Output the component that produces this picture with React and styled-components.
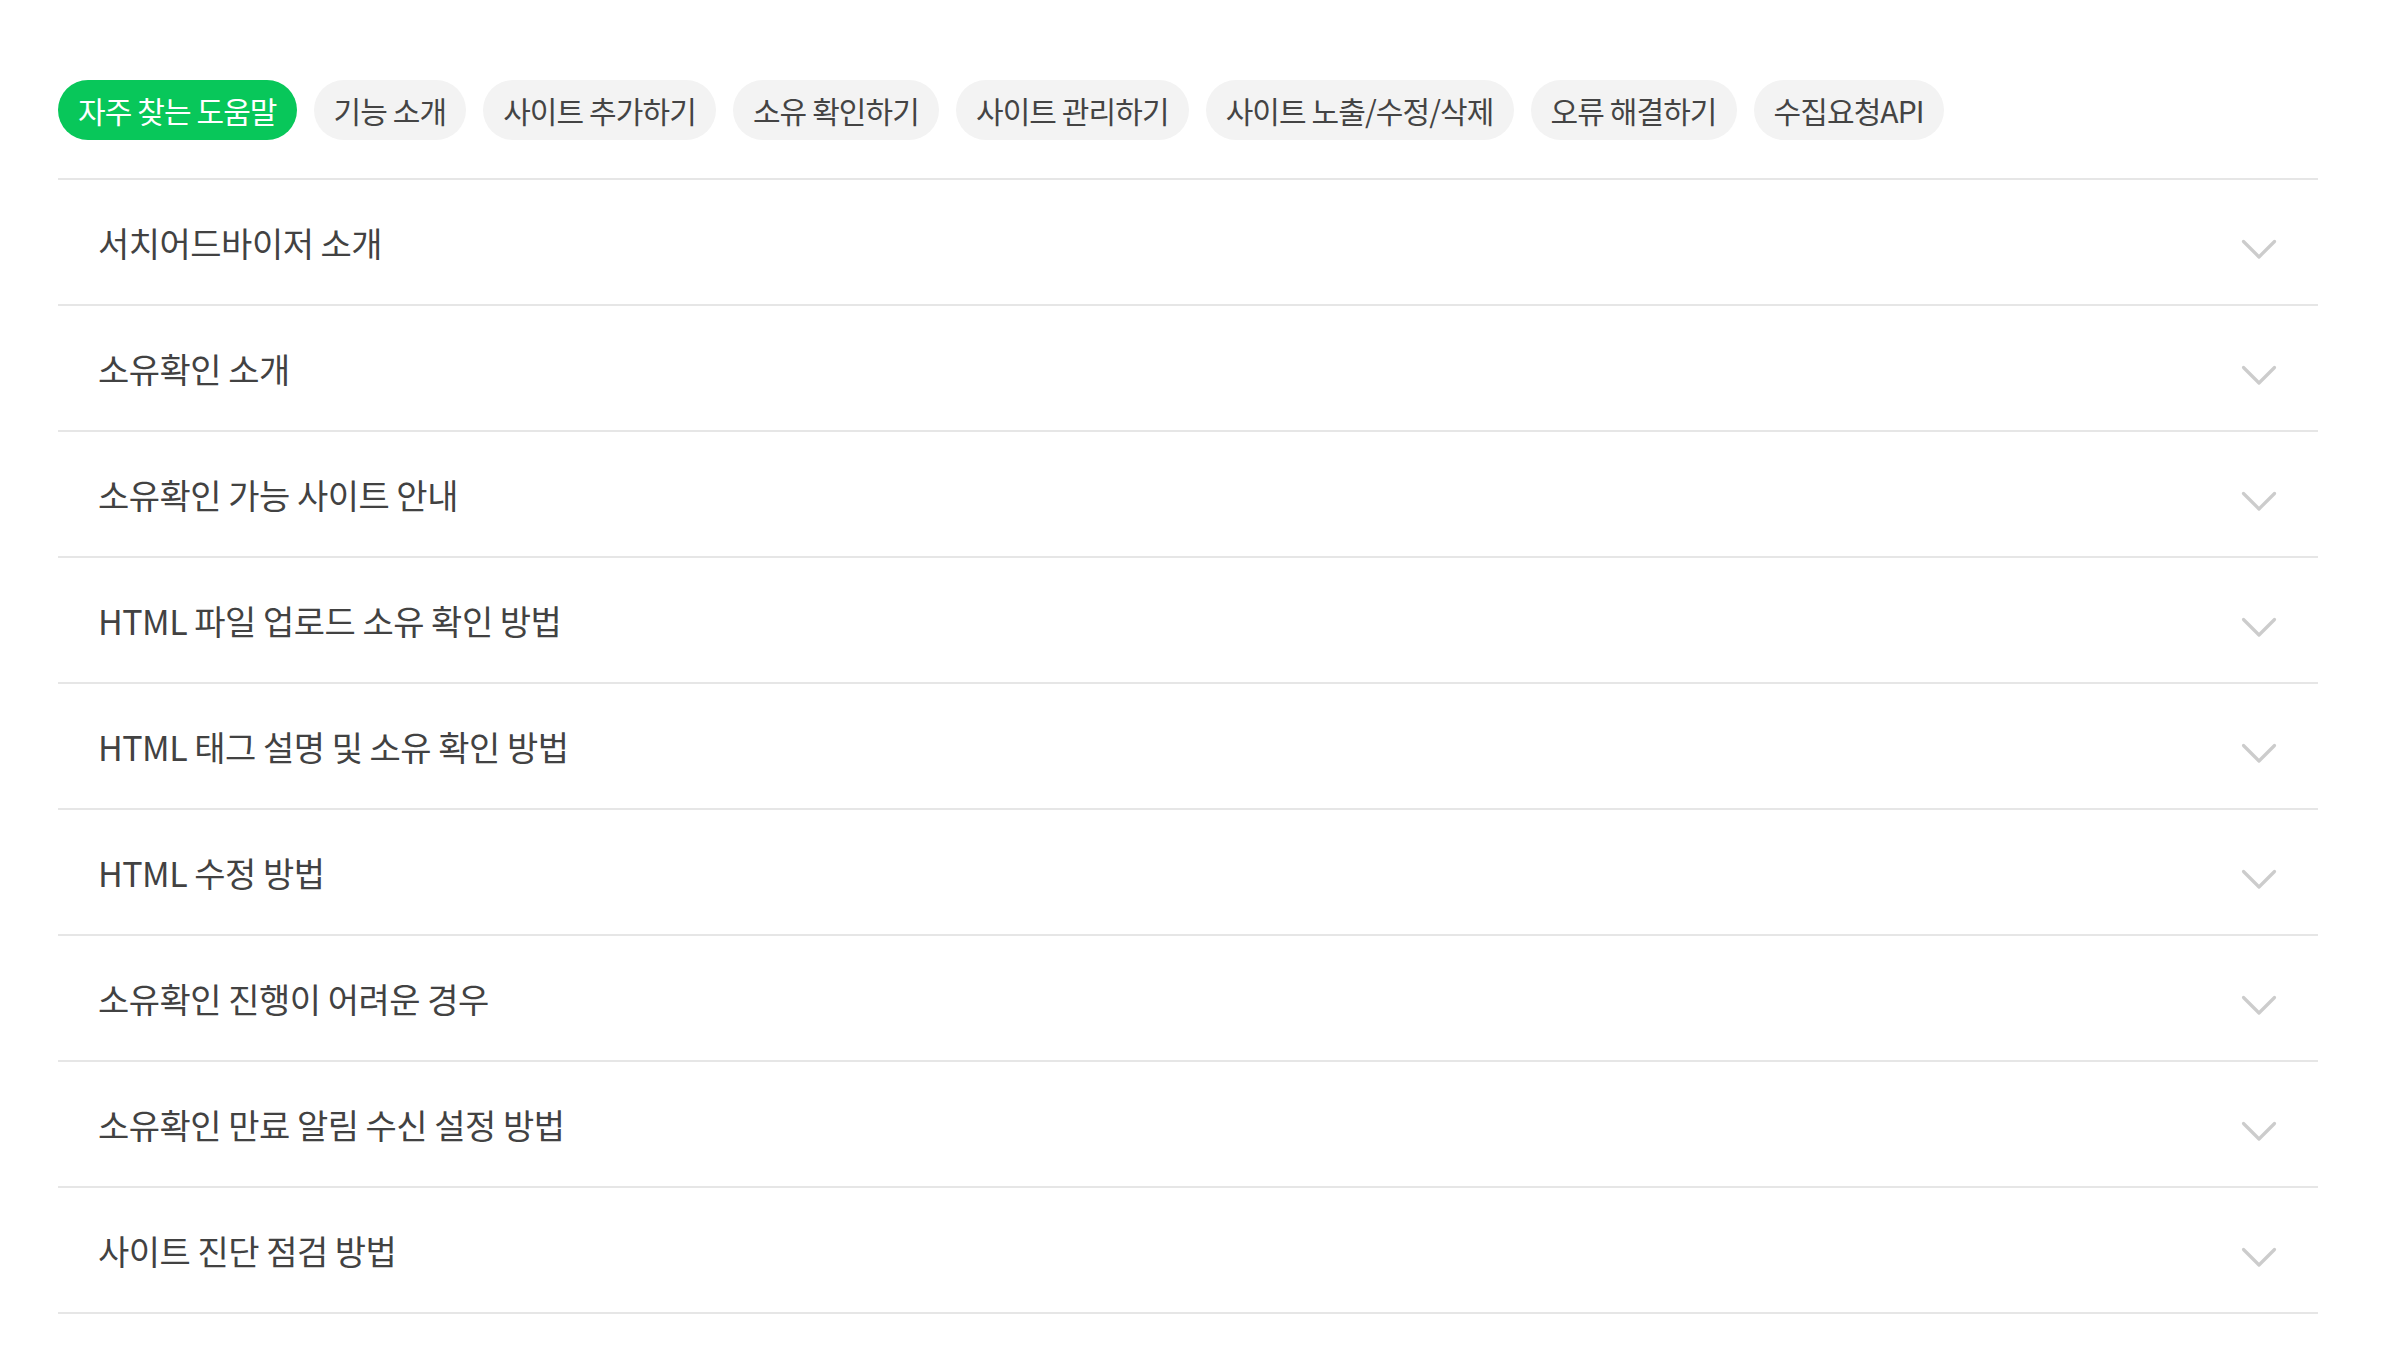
import React, { useState } from "react";
import styled, { createGlobalStyle } from "styled-components";

const GlobalStyle = createGlobalStyle`
  * {
    margin: 0;
    padding: 0;
    box-sizing: border-box;
  }
  body {
    background: #ffffff;
    font-family: "Noto Sans CJK KR", "Noto Sans", sans-serif;
  }
`;

const tabs = [
  "자주 찾는 도움말",
  "기능 소개",
  "사이트 추가하기",
  "소유 확인하기",
  "사이트 관리하기",
  "사이트 노출/수정/삭제",
  "오류 해결하기",
  "수집요청API",
];

const questions = [
  "서치어드바이저 소개",
  "소유확인 소개",
  "소유확인 가능 사이트 안내",
  "HTML 파일 업로드 소유 확인 방법",
  "HTML 태그 설명 및 소유 확인 방법",
  "HTML 수정 방법",
  "소유확인 진행이 어려운 경우",
  "소유확인 만료 알림 수신 설정 방법",
  "사이트 진단 점검 방법",
];

export default function App() {
  const [active, setActive] = useState(0);

  return (
    <>
      <GlobalStyle />
      <Page>
        <TabBar>
          {tabs.map((t, i) => (
            <Tab key={t} $active={i === active} onClick={() => setActive(i)}>
              {t}
            </Tab>
          ))}
        </TabBar>

        <FaqList>
          {questions.map((q) => (
            <FaqRow key={q}>
              <Question>{q}</Question>
              <Chevron width="36" height="21" viewBox="0 0 36 21">
                <polyline
                  points="2.5,2.5 18,18 33.5,2.5"
                  fill="none"
                  stroke="#cccccc"
                  strokeWidth="3.2"
                  strokeLinecap="round"
                  strokeLinejoin="round"
                />
              </Chevron>
            </FaqRow>
          ))}
        </FaqList>
      </Page>
    </>
  );
}

const Page = styled.div`
  width: 2260px;
  margin-left: 58px;
  padding-top: 80px;
`;

const TabBar = styled.div`
  display: flex;
  gap: 17px;
  margin-bottom: 38px;
`;

const Tab = styled.button`
  height: 60px;
  padding: 0 20px;
  border: none;
  border-radius: 30px;
  background: ${(p) => (p.$active ? "#08c75a" : "#f3f3f3")};
  color: ${(p) => (p.$active ? "#ffffff" : "#444444")};
  font-family: "Noto Sans CJK KR", "Noto Sans", sans-serif;
  font-size: 30px;
  letter-spacing: -0.9px;
  white-space: nowrap;
  cursor: pointer;
`;

const FaqList = styled.ul`
  list-style: none;
  border-top: 2px solid #e6e6e6;
`;

const FaqRow = styled.li`
  display: flex;
  align-items: center;
  justify-content: space-between;
  height: 126px;
  padding: 0 41px 0 40px;
  border-bottom: 2px solid #e6e6e6;
`;

const Question = styled.span`
  font-size: 34px;
  letter-spacing: -0.5px;
  color: #424242;
`;

const Chevron = styled.svg`
  margin-top: 14px;
  flex-shrink: 0;
`;
